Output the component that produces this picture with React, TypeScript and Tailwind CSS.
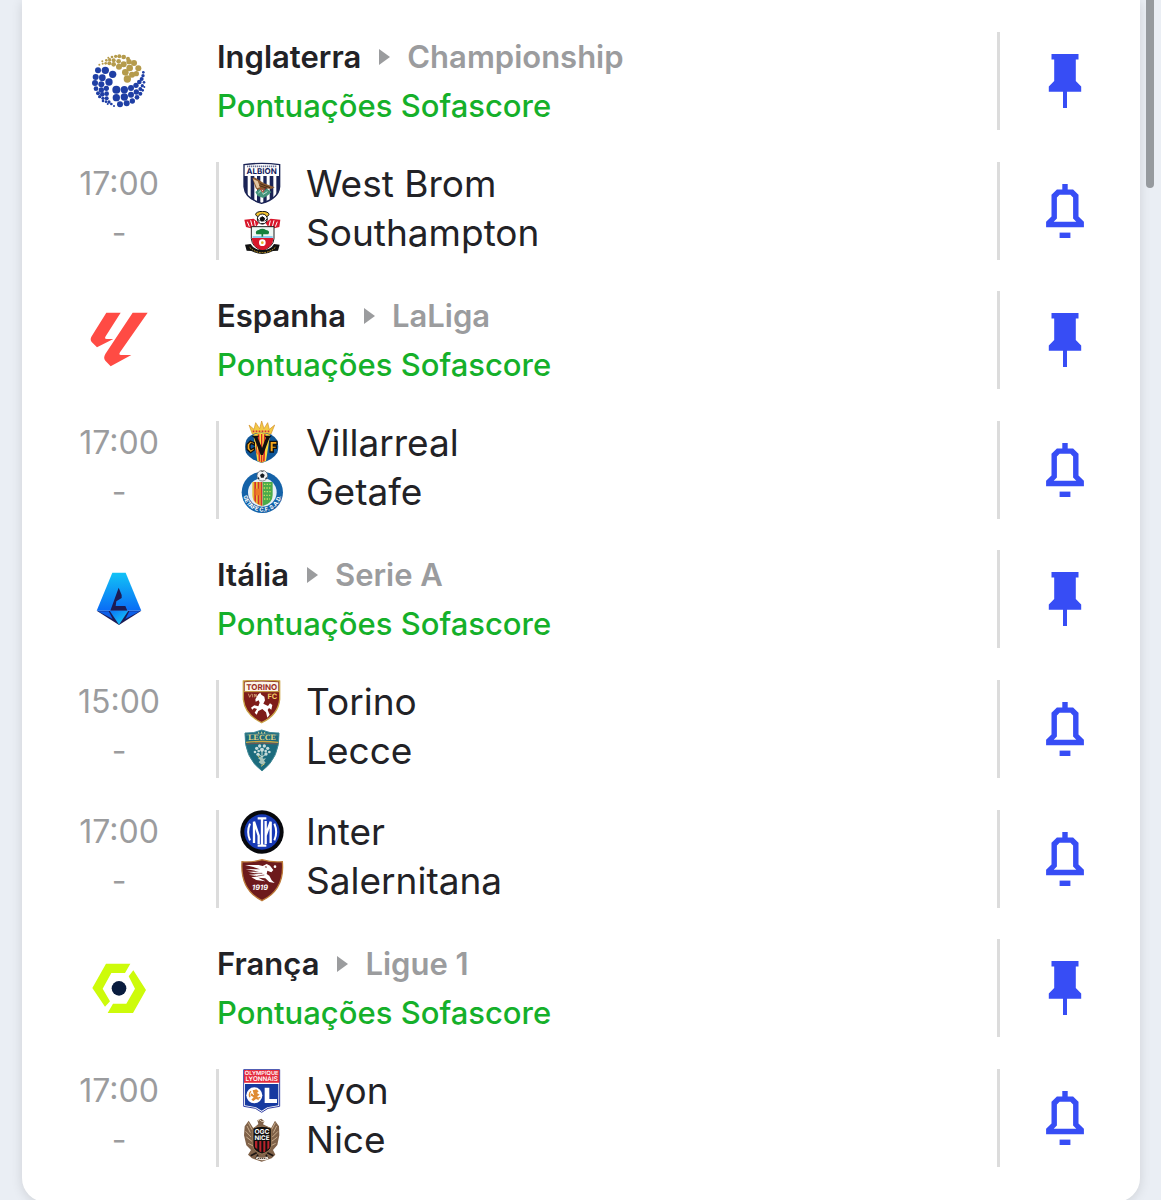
import type { ReactNode } from 'react';

interface Team {
  name: string;
  crest: ReactNode;
}

interface Match {
  time: string;
  home: Team;
  away: Team;
}

interface League {
  country: string;
  name: string;
  logo: ReactNode;
  matches: Match[];
}

// [cx, cy, r]
const goldDots = [
  [172, 144, 11], [166, 124, 10], [186, 131, 9], [199, 128, 8], [179, 111, 10], [205, 112, 9],
  [192, 96, 9], [177, 92, 8], [161, 100, 9], [147, 107, 9], [131, 100, 7],
  [118, 97, 6], [146, 91, 7], [131, 88, 6], [161, 78, 7], [148, 76, 6],
  [137, 76, 5], [174, 83, 6], [119, 86, 5], [107, 97, 4], [109, 88, 4],
  [98, 98, 3], [88, 101, 3], [97, 91, 3], [126, 78, 4], [115, 80, 3],
];

const blueDots = [
  [84, 118, 9], [106, 118, 11], [128, 130, 11], [77, 138, 9], [97, 140, 10],
  [117, 153, 11], [75, 156, 9], [94, 160, 9], [109, 172, 8], [78, 173, 7],
  [94, 177, 8], [84, 187, 6], [97, 190, 7], [110, 188, 7], [89, 197, 5],
  [99, 202, 5], [110, 202, 6], [99, 210, 4], [108, 212, 4], [117, 213, 5],
  [124, 219, 4], [132, 225, 3], [113, 219, 3], [139, 176, 12], [163, 176, 11],
  [183, 171, 9], [198, 163, 8], [208, 153, 7], [215, 144, 6], [219, 134, 5],
  [220, 124, 4], [139, 200, 11], [163, 198, 11], [183, 191, 9], [199, 183, 8],
  [211, 174, 6], [217, 164, 5], [222, 154, 4], [150, 220, 9], [170, 217, 9],
  [187, 210, 8], [201, 199, 7], [211, 188, 6], [218, 178, 4], [223, 168, 3],
];

const ChampionshipLogo = () => (
  <svg viewBox="51 54 192 192" className="size-16" aria-hidden="true">
    <g fill="#b59b4c">
      {goldDots.map(([x, y, r]) => (
        <circle key={`${x}-${y}`} cx={x} cy={y} r={r} />
      ))}
    </g>
    <g fill="#1f3fa5">
      {blueDots.map(([x, y, r]) => (
        <circle key={`${x}-${y}`} cx={x} cy={y} r={r} />
      ))}
    </g>
  </svg>
);

const LaLigaLogo = () => (
  <svg viewBox="51 54 192 192" className="size-16" fill="#ff4b44" aria-hidden="true">
    <path d="M109 68H152L107 139Q102 147 110 147H130L81 172L65 156Q59 149 65 139Z" />
    <path d="M188 68H233L150 187Q145 195 153 195H184L122 229L106 212Q99 204 106 192Z" />
  </svg>
);

const SerieALogo = () => (
  <svg viewBox="51 51 192 192" className="size-16" aria-hidden="true">
    <defs>
      <linearGradient id="serie-a-body" x1="0" y1="0" x2="0" y2="1">
        <stop offset="0" stopColor="#12c3f6" />
        <stop offset="1" stopColor="#0a6cf5" />
      </linearGradient>
      <linearGradient id="serie-a-tip" x1="0" y1="0" x2="1" y2="1">
        <stop offset="0" stopColor="#0a72f5" />
        <stop offset="1" stopColor="#17d7f7" />
      </linearGradient>
    </defs>
    <path d="M80 182H214L147 225Z" fill="#1d1b54" />
    <path d="M127 68H167L214 182H80Z" fill="url(#serie-a-body)" />
    <path d="M146 113L155 135V144L139 154L137 168H166L172 182H121Z" fill="#1d1b54" />
    <path d="M84 184L128 207L116 184Z" fill="#0d5fe8" />
    <path d="M210 184L166 207L178 184Z" fill="#0d5fe8" />
    <path d="M119 182H175L147 224Z" fill="url(#serie-a-tip)" />
  </svg>
);

const Ligue1Logo = () => (
  <svg viewBox="51 48 192 192" className="size-16" aria-hidden="true">
    <path d="M108 71H181L165 99H124L98 146L120 184L105 200L67 144Z" fill="#cdfb0a" />
    <path d="M190 91L228 150L189 219H113L129 191H169L195 146L176 109Z" fill="#cdfb0a" />
    <circle cx="147" cy="145" r="22" fill="#091c3e" />
  </svg>
);

const WestBromCrest = () => (
  <svg viewBox="90 18 132 132" className="size-11" aria-hidden="true">
    <defs>
      <clipPath id="wba">
        <path d="M102 26Q155 16 209 26V92Q206 128 155 143Q105 128 102 92Z" />
      </clipPath>
    </defs>
    <g clipPath="url(#wba)">
      <path d="M100 15H210V145H100Z" fill="#fff" />
      <path d="M102 60h11v80h-11zM122 60h11v80h-11zM141 60h10v80h-10zM160 60h10v80h-10zM179 60h11v80h-11zM199 60h10v80h-10z" fill="#1b2456" />
    </g>
    <path d="M111 31H200" stroke="#6b7296" strokeWidth="5" strokeDasharray="4 2" />
    <text x="155" y="55" textAnchor="middle" fontSize="24" fontWeight="700" textRendering="geometricPrecision" fill="#14205c">ALBION</text>
    <path d="M127 66Q135 61 143 70L162 82L194 94L184 99L165 97L150 108L137 97Z" fill="#8b5a31" />
    <path d="M129 69L143 75L150 94L141 97Z" fill="#e3c6a2" />
    <path d="M150 83L180 95M148 89L172 97" stroke="#4b2c17" strokeWidth="3" />
    <path d="M136 108L148 99L156 106L171 98L184 108L174 118L160 126L143 120Z" fill="#45947b" />
    <path d="M145 111L155 102L160 115L172 107" stroke="#bfe3d0" strokeWidth="3" fill="none" />
    <path d="M151 97L158 109L165 97" stroke="#c63b2b" strokeWidth="3" fill="none" />
    <path d="M102 26Q155 18 209 26V92Q206 128 155 142Q105 128 102 92Z" fill="none" stroke="#1b2456" strokeWidth="4" />
  </svg>
);

const SouthamptonCrest = () => (
  <svg viewBox="90 165 132 132" className="size-11" aria-hidden="true">
    <path d="M103 191L131 188L147 200L133 220L108 213ZM211 191L182 188L166 200L180 220L208 213Z" fill="#d8172b" />
    <path d="M112 197L118 212M122 193L127 212M133 194L136 210M202 197L196 212M192 193L187 212M181 194L177 210" stroke="#fff" strokeWidth="3" />
    <ellipse cx="157" cy="175" rx="20" ry="9" fill="#f2c230" stroke="#111" strokeWidth="3" />
    <circle cx="157" cy="189" r="15" fill="#fff" stroke="#111" strokeWidth="3" />
    <path d="M157 182L164 187L161 195H153L150 187ZM143 189L149 196M171 189L165 196M154 203L161 203" fill="#111" stroke="#111" strokeWidth="3" />
    <path d="M124 212H192V248Q190 273 157 284Q126 273 124 248Z" fill="#eef8f4" stroke="#222" strokeWidth="3" />
    <path d="M126 246H190V250Q188 274 157 284Q128 274 126 250Z" fill="#d8172b" />
    <path d="M128 243H188" stroke="#76c4ee" strokeWidth="5" />
    <path d="M139 235Q134 224 146 222Q157 214 168 222Q182 224 175 235Z" fill="#16823c" />
    <path d="M157 232V242" stroke="#16823c" strokeWidth="5" />
    <circle cx="157" cy="260" r="10" fill="#fff" />
    <circle cx="157" cy="260" r="4" fill="#e6b029" />
    <path d="M105 266L122 264Q132 282 157 282Q182 282 192 264L209 266L204 284L189 285Q158 303 124 285L110 284Z" fill="#111" />
    <path d="M119 274Q135 290 157 290Q180 290 196 274" fill="none" stroke="#d4a72a" strokeWidth="3" strokeDasharray="5 3" />
  </svg>
);

const VillarrealCrest = () => (
  <svg viewBox="90 17 132 132" className="size-11" aria-hidden="true">
    <path d="M117 29L132 42L137 22L149 40L155 17L162 40L173 22L178 42L194 29L183 56H127Z" fill="#f3c944" stroke="#d18d26" strokeWidth="2" />
    <path d="M128 48H182" stroke="#cc3138" strokeWidth="5" strokeDasharray="5 4" />
    <path d="M155 52Q188 52 201 74Q208 92 202 112Q190 132 155 143Q120 132 108 112Q102 92 109 74Q122 52 155 52Z" fill="#0f5697" />
    <path d="M130 58Q155 48 180 58L168 137L155 142L142 137Z" fill="#fbd83c" />
    <path d="M143 57H148L151 140L146 136ZM153 56H157V141H153ZM162 57H167L164 136L159 139ZM137 64L143 119L139 112Z" fill="#d92a27" />
    <path d="M121 77L111 87V102L122 112L133 104V97L123 103L120 98V89L124 84L133 89V82Z" fill="#f7a81b" stroke="#111" strokeWidth="4" />
    <path d="M180 78H201V87H190V92H199V99H190V110H180Z" fill="#f7a81b" stroke="#111" strokeWidth="4" />
    <path d="M125 61H147L143 67L156 98L168 67L163 61H185L178 69L159 119H152L133 69Z" fill="#111" />
  </svg>
);

const GetafeCrest = () => (
  <svg viewBox="90 164 132 132" className="size-11" aria-hidden="true">
    <defs>
      <path id="getafe-ring" d="M99 231A58 58 0 0 0 215 231" />
    </defs>
    <circle cx="157" cy="231" r="62" fill="#1462a8" />
    <circle cx="157" cy="231" r="43" fill="#e7eff6" />
    <path d="M127 200H157V272Q127 265 127 239Z" fill="#e8bd32" />
    <path d="M133 200h5v62l-5-7zM143 200h5v68l-5-3zM152 200h5v71l-5-1z" fill="#d63130" />
    <path d="M158 200H188V239Q188 265 158 272Z" fill="#4bab4a" />
    <path d="M162 207H184M161 218H185M162 229H184M161 240H184M162 251H180" stroke="#c9dd62" strokeWidth="4" strokeDasharray="4 4" />
    <path d="M136 220H152V240H136Z" fill="#ec7b27" />
    <circle cx="157" cy="181" r="16" fill="#f2f3f5" stroke="#51565c" strokeWidth="2" />
    <path d="M157 174L164 179L161 187H153L150 179ZM144 184L149 190L144 191ZM170 184L165 190L170 191ZM150 167L157 169L163 167Z" fill="#171b21" />
    <text fontSize="17" fontWeight="700" textRendering="geometricPrecision" fill="#fff">
      <textPath href="#getafe-ring" startOffset="50%" textAnchor="middle">GETAFE C.F. S.A.D.</textPath>
    </text>
  </svg>
);

const TorinoCrest = () => (
  <svg viewBox="90 15 132 132" className="size-11" aria-hidden="true">
    <path d="M100 18Q155 13 209 18V73Q205 119 155 143Q105 119 100 73Z" fill="#7e1c19" stroke="#c9a246" strokeWidth="4" />
    <path d="M104 22Q155 17 205 22V49H104Z" fill="#fcf5e8" />
    <path d="M101 50H208" stroke="#c9a246" strokeWidth="3" />
    <text x="155" y="45" textAnchor="middle" fontSize="24" fontWeight="700" textRendering="geometricPrecision" fill="#9a2c24">TORINO</text>
    <text x="187" y="71" textAnchor="middle" fontSize="22" fontWeight="700" textRendering="geometricPrecision" fill="#f5ce67">FC</text>
    <path d="M115 56L119 67L125 56M128 57V67M134 67V57L139 66V57" fill="none" stroke="#e9c58b" strokeWidth="2" />
    <path d="M145 58L151 53L154 59L163 65L165 76L160 86L174 93L180 85L187 90L184 104L177 99L173 105L179 119L172 128L168 112L157 102L145 108L140 119L134 113L141 102L132 99L127 104L123 98L133 91L145 94L149 83L146 76L137 80L136 73Z" fill="#fff" />
  </svg>
);

const LecceCrest = () => (
  <svg viewBox="90 162 132 132" className="size-11" aria-hidden="true">
    <path d="M105 174Q132 176 155 165Q180 176 207 174Q210 248 156 288Q102 248 105 174Z" fill="#1c6b7d" stroke="#3f8794" strokeWidth="3" />
    <path d="M109 180Q155 172 203 180" stroke="#8ba58e" strokeWidth="2" fill="none" />
    <text x="156" y="196" textAnchor="middle" fontFamily="Liberation Serif, serif" fontSize="24" fontWeight="700" textRendering="geometricPrecision" fill="#e6d886">LECCE</text>
    <path d="M146 171V176M155 170V176M164 171V176" stroke="#d5d391" strokeWidth="3" />
    <path d="M108 202Q156 197 205 202" stroke="#cfa642" strokeWidth="4" fill="none" />
    <path d="M110 207Q156 202 203 207" stroke="#a34a3d" strokeWidth="2" fill="none" />
    <g fill="#c7dcdb">
      <circle cx="140" cy="220" r="5" />
      <circle cx="135" cy="231" r="4" />
      <circle cx="144" cy="238" r="5" />
      <circle cx="149" cy="213" r="5" />
      <circle cx="156" cy="224" r="6" />
      <circle cx="163" cy="213" r="5" />
      <circle cx="173" cy="220" r="5" />
      <circle cx="178" cy="231" r="4" />
      <circle cx="168" cy="237" r="5" />
      <circle cx="146" cy="228" r="4" />
      <circle cx="167" cy="228" r="4" />
    </g>
    <path d="M156 226V250M146 238L156 246L167 238" stroke="#cfe0d4" strokeWidth="3" fill="none" />
    <path d="M144 249L153 245L160 251L168 250L162 257L167 263L156 269L146 262L151 256Z" fill="#a9c5bd" />
    <path d="M143 243L150 248M164 266L153 274" stroke="#d7c46c" strokeWidth="3" />
  </svg>
);

const InterCrest = () => (
  <svg viewBox="90 15 132 132" className="size-11" aria-hidden="true">
    <circle cx="156" cy="81" r="65" fill="#07080c" />
    <circle cx="156" cy="81" r="53" fill="#1739b4" />
    <g fill="none" stroke="#fff" strokeWidth="7">
      <path d="M143 40H169M156 40V122M143 122H169" />
      <path d="M132 114V50L146 92V117" />
      <path d="M167 117V48M167 92L182 50V114" />
      <path d="M120 56Q109 81 120 106M193 56Q204 81 193 106" strokeWidth="6" />
    </g>
  </svg>
);

const SalernitanaCrest = () => (
  <svg viewBox="90 162 132 132" className="size-11" aria-hidden="true">
    <path d="M96 170Q125 173 156 164Q187 173 217 170Q225 254 156 287Q90 254 96 170Z" fill="#6d1a1c" stroke="#bd7b3a" strokeWidth="4" />
    <path d="M105 180H146L158 183L170 177L180 182L190 195L184 202L172 197L170 207L178 212L185 226L194 234L178 231L166 220L145 218L166 229L139 225L124 217L146 214L116 209L145 207L113 200L147 200L107 192L150 193L130 186Z" fill="#fff" />
    <path d="M164 186L169 183L170 189Z" fill="#6d1a1c" />
    <path d="M134 205H157M142 213L163 210" stroke="#6d1a1c" strokeWidth="2" />
    <circle cx="195" cy="185" r="4" fill="#fff" />
    <text x="150" y="255" textAnchor="middle" fontSize="22" fontStyle="italic" fontWeight="700" textRendering="geometricPrecision" fill="#fff">1919</text>
  </svg>
);

const LyonCrest = () => (
  <svg viewBox="90 12 132 132" className="size-11" aria-hidden="true">
    <path d="M101 14H209V124L174 130L155 142L136 130L101 124Z" fill="#fff" stroke="#3340a5" strokeWidth="3" />
    <path d="M102 15H208V53H102Z" fill="#e52c3d" />
    <path d="M105 57H205V121L172 127L155 137L138 127L105 121Z" fill="#173aa0" />
    <g fill="#fff" fontWeight="600" textRendering="geometricPrecision" textAnchor="middle">
      <text x="155" y="31" fontSize="17">OLYMPIQUE</text>
      <text x="155" y="49" fontSize="19">LYONNAIS</text>
    </g>
    <circle cx="133" cy="91" r="24" fill="#fff" />
    <path d="M164 68H178V102H201V114H164Z" fill="#fff" />
    <path d="M128 76L139 73L146 79L141 84L149 89L142 94L147 106L138 102L130 108L124 104L131 97L121 91L124 85L132 90Z" fill="#df8b33" />
    <path d="M120 97Q115 86 123 79M143 100L151 97" fill="none" stroke="#df8b33" strokeWidth="4" />
  </svg>
);

const NiceCrest = () => (
  <svg viewBox="90 159 132 132" className="size-11" aria-hidden="true">
    <path d="M145 177L142 166L154 161L163 169L159 178L183 190L195 167L207 184L208 211L202 240L189 255L196 269L185 280L155 290L126 280L114 269L123 255L109 241L102 211L104 184L116 167L130 190Z" fill="#806249" />
    <path d="M111 183L121 203M107 199L123 216M109 216L126 229M114 235L130 243M200 183L190 203M204 199L187 216M202 216L185 229M197 235L181 243M115 173L126 194M196 173L185 194" stroke="#c9ad8c" strokeWidth="3" />
    <path d="M144 168L149 164L154 169L163 170" stroke="#ddcab3" strokeWidth="3" fill="none" />
    <path d="M129 190Q155 178 184 190V243Q181 259 156 267Q131 259 129 243Z" fill="#12100f" stroke="#b89367" strokeWidth="2" />
    <path d="M135 228h7v25l-7-6zM148 228h6v34l-6-3zM160 228h6v32l-6 2zM172 228h6v20l-6 6z" fill="#b9232b" />
    <g fill="#fff" fontWeight="700" textRendering="geometricPrecision" textAnchor="middle">
      <text x="156" y="207" fontSize="20">OGC</text>
      <text x="156" y="225" fontSize="19">NICE</text>
    </g>
    <path d="M122 272L140 263M190 272L172 263M138 281L144 269M174 281L168 269" stroke="#1e1713" strokeWidth="5" />
    <path d="M139 278Q156 286 174 278" stroke="#f4eee5" strokeWidth="8" fill="none" />
    <path d="M143 280H169" stroke="#382a20" strokeWidth="3" strokeDasharray="4 2" />
  </svg>
);

const leagues: League[] = [
  {
    country: 'Inglaterra',
    name: 'Championship',
    logo: <ChampionshipLogo />,
    matches: [
      {
        time: '17:00',
        home: { name: 'West Brom', crest: <WestBromCrest /> },
        away: { name: 'Southampton', crest: <SouthamptonCrest /> },
      },
    ],
  },
  {
    country: 'Espanha',
    name: 'LaLiga',
    logo: <LaLigaLogo />,
    matches: [
      {
        time: '17:00',
        home: { name: 'Villarreal', crest: <VillarrealCrest /> },
        away: { name: 'Getafe', crest: <GetafeCrest /> },
      },
    ],
  },
  {
    country: 'Itália',
    name: 'Serie A',
    logo: <SerieALogo />,
    matches: [
      {
        time: '15:00',
        home: { name: 'Torino', crest: <TorinoCrest /> },
        away: { name: 'Lecce', crest: <LecceCrest /> },
      },
      {
        time: '17:00',
        home: { name: 'Inter', crest: <InterCrest /> },
        away: { name: 'Salernitana', crest: <SalernitanaCrest /> },
      },
    ],
  },
  {
    country: 'França',
    name: 'Ligue 1',
    logo: <Ligue1Logo />,
    matches: [
      {
        time: '17:00',
        home: { name: 'Lyon', crest: <LyonCrest /> },
        away: { name: 'Nice', crest: <NiceCrest /> },
      },
    ],
  },
];

const PinIcon = () => (
  <svg viewBox="0 0 54 54" className="size-[54px]" fill="currentColor" aria-hidden="true">
    <path d="M13.5 0H40.5V5.4H37.8V27L43.2 32.4V37.8H29V54H25V37.8H10.8V32.4L16.2 27V5.4H13.5Z" />
  </svg>
);

const BellIcon = () => (
  <svg viewBox="0 0 54 54" className="size-[54px]" fill="currentColor" aria-hidden="true">
    <path
      fillRule="evenodd"
      d="M24.3 0H29.7V5.4H35.1L40.5 10.8V32.4L45.9 37.8V43.2H8.1V37.8L13.5 32.4V10.8L18.9 5.4H24.3ZM21.6 10.8L18.9 13.5V34.6L15.7 37.8H38.3L35.1 34.6V13.5L32.4 10.8Z"
    />
    <path d="M21.6 48.6H32.4V54H21.6Z" />
  </svg>
);

const RowAction = ({ label, children }: { label: string; children: ReactNode }) => (
  <div className="flex w-[143px] shrink-0 items-center justify-center border-l-3 border-[#dcdcdc] pr-2.5">
    <button type="button" aria-label={label} className="cursor-pointer text-[#374df5]">
      {children}
    </button>
  </div>
);

const LeagueHeader = ({ league }: { league: League }) => (
  <div className="flex h-[98px]">
    <div className="flex w-[195px] shrink-0 items-center justify-center pr-0.5">{league.logo}</div>
    <div className="min-w-0 flex-1 text-[31px] leading-[49px]">
      <div className="flex items-center">
        <a href="#" className="font-semibold text-[#222226]">{league.country}</a>
        <svg viewBox="0 0 12 16" className="mr-4 ml-[18px] h-4 w-3" fill="#9b9c9e" aria-hidden="true">
          <path d="M0 0L11 8L0 16Z" />
        </svg>
        <a href="#" className="font-semibold text-[#9b9c9e]">{league.name}</a>
      </div>
      <a href="#" className="font-medium text-[#15b02a]">Pontuações Sofascore</a>
    </div>
    <RowAction label={`Fixar ${league.name}`}>
      <PinIcon />
    </RowAction>
  </div>
);

const TeamLine = ({ team }: { team: Team }) => (
  <div className="flex items-center">
    {team.crest}
    <span className="ml-[22px] text-[37px] leading-[44px] text-[#222226]">{team.name}</span>
  </div>
);

const MatchRow = ({ match }: { match: Match }) => (
  <div className="flex h-[98px]">
    <div className="flex w-[194px] shrink-0 flex-col items-center gap-[5px] text-[32px] leading-[44px] text-[#9b9c9e]">
      <span>{match.time}</span>
      <span>-</span>
    </div>
    <div className="flex min-w-0 flex-1 flex-col gap-[5px] border-l-3 border-[#dcdcdc] pl-[21px]">
      <TeamLine team={match.home} />
      <TeamLine team={match.away} />
    </div>
    <RowAction label={`Notificações de ${match.home.name} - ${match.away.name}`}>
      <BellIcon />
    </RowAction>
  </div>
);

export default function App() {
  return (
    <div className="relative h-screen overflow-hidden bg-[#eaeef4] pr-[21px] pl-[22px] font-['Inter',sans-serif]">
      <main className="flex flex-col gap-[31px] rounded-b-3xl bg-white pt-8 pb-[35px] shadow-[0_2px_12px_rgba(0,0,0,0.12)]">
        {leagues.map((league) => (
          <section key={league.name} className="flex flex-col gap-8">
            <LeagueHeader league={league} />
            {league.matches.map((match) => (
              <MatchRow key={match.home.name} match={match} />
            ))}
          </section>
        ))}
      </main>

      {/* Scrollbar thumb */}
      <div className="absolute top-0 right-[7px] h-[188px] w-2 rounded-b-full bg-[#969a9e]" />
    </div>
  );
}
